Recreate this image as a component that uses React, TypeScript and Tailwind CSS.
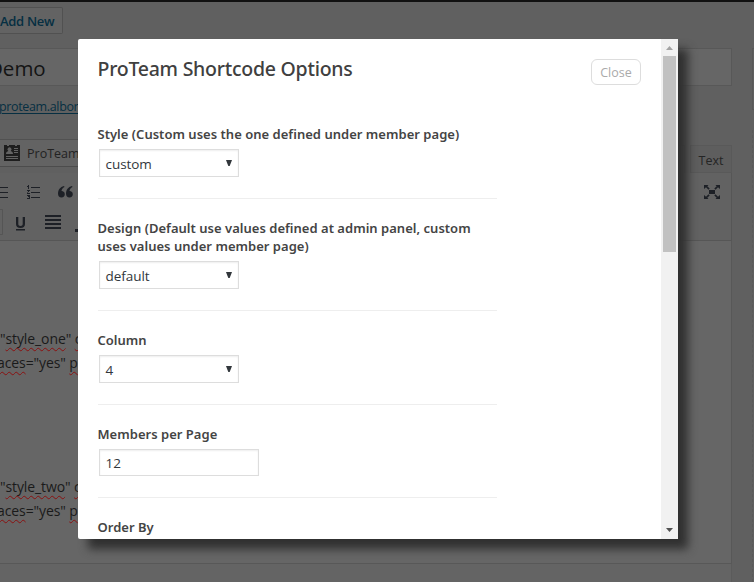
import React from "react";

const ui = "font-['Open_Sans','Noto_Sans',sans-serif]";

function Line({ before, word, after, tail }: { before: string; word: string; after: string; tail: string }) {
  return (
    <div className="flex h-6 items-center whitespace-pre text-[14px] leading-6 tracking-[-0.1px] text-[#1a1a1a]">
      <span>{before}</span>
      <span className="underline decoration-[#8a1010] decoration-wavy decoration-[1px] underline-offset-[3px]">{word}</span>
      <span>{after}</span>
      <span className="underline decoration-[#8a1010] decoration-wavy decoration-[1px] underline-offset-[3px]">{tail}</span>
    </div>
  );
}

function EditorIcons() {
  return (
    <svg width="78" height="66" viewBox="0 0 78 66" fill="#1d2026" className="mt-px block">
      <path d="M0 13h8v1H0zM0 18h8v1H0zM0 23h8v1H0z" />
      <path d="M31 13h9v1h-9zM31 18h9v1h-9zM31 23h9v1h-9z" />
      <path d="M28 11h1v4h-1zM27 12h1v1h-1zM27 16h3v1h-1v1h-1v1h2v1h-3v-1l1-1v-1h-1zM27 21h3v4h-3v-1h2v-1h-1v-1h1v0h-2z" />
      <path d="M64 12c-4 1-6 4-6 7.500c0 2.500 1.300 4 3.500 4s3.300-1.500 3.300-3.300s-1.300-3.100-3.300-3.100c.3-1.700 1-2.900 3-4zM72 12c-4 1-6 4-6 7.500c0 2.500 1.300 4 3.500 4s3.300-1.500 3.300-3.300s-1.300-3.100-3.300-3.100c.3-1.700 1-2.900 3-4z" />
      <path d="M-5 35.500H2.500V60.500H-5" fill="none" stroke="#555" />
      <path d="M16 43h2.300v7c0 1.200.7 1.900 2.200 1.900S22.700 51.200 22.700 50v-7H25v7c0 2.600-1.600 4-4.500 4S16 52.600 16 50zM16 55h9v1.500h-9z" />
      <path d="M45 41h16v2H45zM45 45h16v2H45zM45 49h16v2H45zM45 53h16v2H45zM75 55h3v3h-3z" />
    </svg>
  );
}

function EditorPage() {
  return (
    <div className="flex h-full w-full flex-col bg-[#606060]">
      <div className="h-[2px] shrink-0 bg-[#111]" />
      <div className="flex min-h-0 grow">
        <div className="flex w-[732px] shrink-0 flex-col pt-[5px]">
          <div className="flex h-[27px] w-[63px] items-center rounded-r-[2px] border border-l-0 border-[#515151] bg-[#636363] pt-[2px] text-[13px] font-semibold tracking-[-0.3px] text-[#062f42]">
            Add New
          </div>
          <div className="mt-[14px] flex h-[38px] items-center overflow-hidden whitespace-nowrap border border-l-0 border-[#585858] bg-[#666] pt-[3px] text-[20.500px] text-[#141414]">
            <span className="-ml-[12px]">Demo</span>
          </div>
          <div className="mt-[12px] h-[18px] whitespace-nowrap text-[12.500px] leading-[18px] tracking-[-0.35px] text-[#062f42] underline underline-offset-[2px]">
            <span className="-ml-px">proteam.albor</span>
          </div>
          <div className="mt-[23px] flex h-[34px]">
            <div className="flex h-[28px] w-[82px] items-center gap-[7px] overflow-hidden whitespace-nowrap border-y border-t-[#515151] border-b-[#4c4c4c] bg-[#636363] pl-1 text-[12.5px] text-[#222]">
              <svg width="16" height="16" viewBox="0 0 16 16" className="shrink-0">
                <path fill="#1e1e1e" d="M0 0h3v1h2V0h6v1h2V0h3v16H0z" />
                <path fill="#636363" d="M2 9c0-2 1-2.500 2.300-3a2 2 0 1 1 2.400 0C8 6.500 9 7 9 9zM10 3h4v1h-4zM10 5h4v1h-4zM10 7h4v1h-4zM2 11h12v1H2zM2 13h12v1H2z" />
              </svg>
              <span className="pt-[2px]">ProTeam</span>
            </div>
            <div className="ml-auto mt-[6px] flex gap-[5px]">
              <div className="h-[28px] w-[60px] border border-b-0 border-[#595959] bg-[#626262]" />
              <div className="flex h-[28px] w-[42px] items-center justify-center border border-[#595959] bg-[#5e5e5e] pt-[5px] text-[12.500px] text-[#252525]">
                Text
              </div>
            </div>
          </div>
          <div className="flex h-[68px] justify-between border-r border-b border-[#565656] bg-[#626262]">
            <EditorIcons />
            <svg width="16" height="14" viewBox="0 0 16 14" fill="#1d2026" className="mr-[11px] mt-3">
              <path d="M5 5h6v4H5zM0 0h4.500L3.300 1.200 5.700 3.500 4.500 4.700 2 2.300 0 4zM16 0h-4.500l1.200 1.200-2.400 2.300 1.200 1.200L14 2.300 16 4zM0 14h4.500l-1.200-1.200 2.400-2.300-1.200-1.200L2 11.700 0 10zM16 14h-4.500l1.200-1.200-2.400-2.300 1.200-1.200L14 11.700 16 10z" />
            </svg>
          </div>
          <div className="h-[323px] shrink-0 overflow-hidden border-r border-b border-[#585858] bg-[#666] pt-[86px]">
            <Line before={'"'} word="style_one" after={'" '} tail="c" />
            <div className="-ml-[3px]">
              <Line before="" word="aces" after={'="yes" '} tail="p" />
            </div>
            <div className="mt-[100px]">
              <Line before={'"'} word="style_two" after={'" '} tail="c" />
            </div>
            <div className="-ml-[3px]">
              <Line before="" word="aces" after={'="yes" '} tail="p" />
            </div>
          </div>
          <div className="grow border-r border-[#5b5b5b] bg-[#646464]" />
        </div>
        <div className="ml-auto flex w-[2px] flex-col gap-5 pt-[46px]">
          <div className="h-[62px] border border-r-0 border-[#585858]" />
          <div className="grow border-l border-dashed border-[#595959]" />
        </div>
      </div>
    </div>
  );
}

function Field({ label, value, input = false }: { label: React.ReactNode; value: string; input?: boolean }) {
  return (
    <div className="w-[399.5px] border-b border-[#eee] pb-[21px]">
      <div className="whitespace-nowrap font-['Noto_Sans'] text-[13px] font-[560] leading-[18px] tracking-[0.02px] text-[#444]">
        {label}
      </div>
      <div
        className={
          "ml-px mt-[6px] flex items-center justify-between border border-[#ddd] pl-[6px] pr-[6px] text-[13.500px] tracking-[-0.05px] text-[#32373c] shadow-[inset_0_1px_2px_rgba(0,0,0,0.07)] " +
          (input ? "h-[27px] w-[160px]" : "h-[28px] w-[140px]")
        }
      >
        <span className="pt-[2px]">{value}</span>
        {!input && (
          <svg width="6" height="6" viewBox="0 0 6 6" className="mb-px">
            <path d="M0 0h6L3.700 6H2.300z" fill="#32373c" />
          </svg>
        )}
      </div>
    </div>
  );
}

export default function App() {
  return (
    <div className={"relative h-[582px] w-[754px] overflow-hidden " + ui}>
      <EditorPage />
      <div className="absolute left-[78px] top-[39px] flex h-[500px] w-[600px] rounded-[2px] bg-white shadow-[10px_10px_10px_#303030]">
        <div className="flex grow flex-col overflow-hidden pl-[19.500px] pr-5">
          <div className="flex h-[86px] shrink-0 items-start justify-between pt-5">
            <h1 className="mt-[-4px] whitespace-nowrap font-['Noto_Sans'] text-[19.500px] font-medium leading-7 tracking-[-0.25px] text-[#404040]">
              ProTeam Shortcode Options
            </h1>
            <button className="h-[26px] w-[50px] rounded-[6px] border border-[#ddd] text-[12.500px] leading-[25px] text-[#aaa]">
              Close
            </button>
          </div>
          <div className="flex flex-col gap-[20px]">
            <Field
              label={<span>Style (Custom uses the one defined under member page)</span>}
              value="custom"
            />
            <Field
              label={
                <>
                  <span>Design (Default use values defined at admin panel, custom</span>
                  <br />
                  <span>uses values under member page)</span>
                </>
              }
              value="default"
            />
            <Field label="Column" value="4" />
            <Field label="Members per Page" value="12" input />
            <Field label="Order By" value="date" />
          </div>
        </div>
        <div className="flex w-[17px] shrink-0 flex-col items-center bg-[#f1f1f1]">
          <svg width="17" height="17" viewBox="0 0 17 17">
            <path d="M5 11L8.500 7 12 11z" fill="#a3a3a3" />
          </svg>
          <div className="h-[196px] w-[13px] bg-[#c1c1c1]" />
          <svg width="17" height="17" viewBox="0 0 17 17" className="mt-auto">
            <path d="M5 6L8.500 10 12 6z" fill="#505050" />
          </svg>
        </div>
      </div>
    </div>
  );
}
